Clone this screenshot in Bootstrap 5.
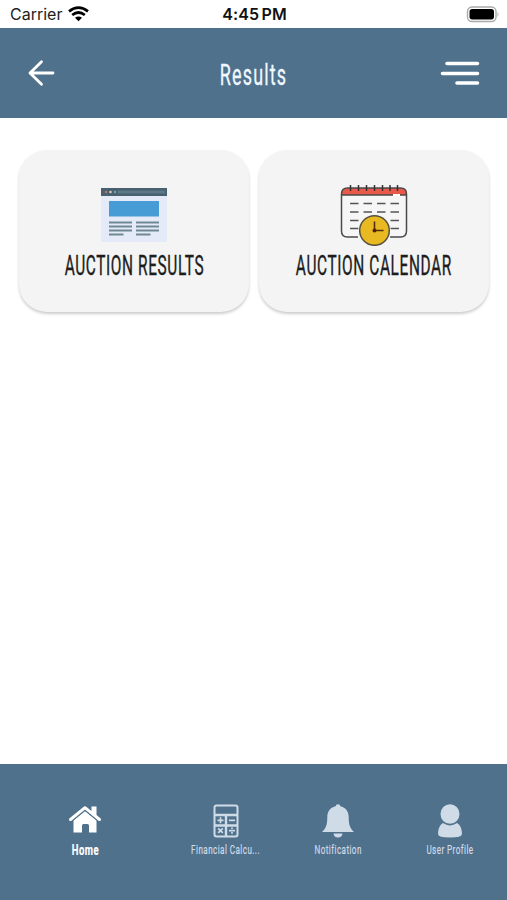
<!DOCTYPE html>
<html lang="en">
<head>
<meta charset="utf-8">
<meta name="viewport" content="width=device-width, initial-scale=1">
<title>Results</title>
<link href="https://cdn.jsdelivr.net/npm/bootstrap@5.3.0/dist/css/bootstrap.min.css" rel="stylesheet">
<style>
body{font-family:Roboto,"Liberation Sans",sans-serif;height:900px;overflow:hidden;background:#fff}
svg{display:block}
.status{height:28px;font-family:Inter,"Liberation Sans",sans-serif;font-size:16px;line-height:28px;color:#222}
.status>*{flex:1}
.carrier{padding-left:10px;gap:6px}
.clock{font-weight:600;color:#111;font-size:16px;letter-spacing:.15px;word-spacing:-2px}
.bar{height:90px;background:#50718c;color:#fff;padding:0 27px}
.narrow{display:inline-block;white-space:nowrap;transform-origin:center}
.title{font-size:29px;line-height:36px;letter-spacing:1.9px;transform:scaleX(.62);color:#f0f8ff;padding-top:3px;-webkit-text-stroke:.3px #f0f8ff}
.tiles{padding:32px 18px 0 19px;gap:10px}
.tile{flex:1 1 0;width:0;height:162px;border:0;border-radius:28px;background:#f4f4f4;box-shadow:0 2px 3px rgba(0,0,0,.2);padding-top:34px}
.tile-label{font-size:27px;line-height:32px;letter-spacing:1.1px;color:#1d1d1d;-webkit-text-stroke:.4px #1d1d1d;transform:scaleX(.57)}
.art{height:66px}
.tabs{height:136px;background:#50718c;padding:38px 0 0 29px}
.tab{width:112px;color:#cfdce8}
.tab-first{margin-right:29px}
.tab-icon{height:38px}
.tab-label{font-size:13px;line-height:18px;letter-spacing:.72px;-webkit-text-stroke:.2px currentColor;margin-top:1px;transform:scaleX(.62)}
.home-label{font-size:15.5px;font-weight:700;letter-spacing:.8px;color:#fff;transform:scaleX(.61)}
</style>
<script src="https://cdn.jsdelivr.net/npm/bootstrap@5.3.0/dist/js/bootstrap.bundle.min.js"></script>
</head>
<body class="d-flex flex-column">
<div class="status d-flex align-items-center">
  <div class="carrier d-flex align-items-center"><span>Carrier</span>
    <svg width="21" height="16" viewBox="0 0 21 16" fill="none" stroke="#000" stroke-width="2.7"><path d="M1 5.4Q10.500-2 20 5.400M4.200 9Q10.500 4 16.800 9"/><path d="M7 11.800Q10.500 9.200 14 11.800L10.500 15.300Z" fill="#000" stroke="none"/></svg>
  </div>
  <div class="clock text-center">4:45 PM</div>
  <div class="d-flex justify-content-end pe-2">
    <svg width="33" height="17" viewBox="0 0 33 17"><rect x="1.500" y="1" width="28.500" height="14.500" rx="4.500" fill="#fff" stroke="#aaa" stroke-width="1.400"/><rect x="3.500" y="3" width="24.500" height="10.500" rx="2.700"/><path d="M31.500 6v5q2-2.500 0-5" fill="#aaa"/></svg>
  </div>
</div>
<header class="bar d-flex align-items-center justify-content-between">
  <svg width="40" height="28" viewBox="0 0 40 28" fill="none" stroke="#fff" stroke-width="2.800" stroke-linecap="round" stroke-linejoin="round"><path d="M26 14H3M14.500 2.800L3 14L14.500 25.200"/></svg>
  <span class="narrow title">Results</span>
  <svg width="40" height="28" viewBox="0 0 40 28" stroke="#fff" stroke-width="3.600" stroke-linecap="round"><path d="M7 4.500H37.500M2.500 14.500H37.500M17 24H37.500"/></svg>
</header>
<main class="tiles d-flex flex-grow-1 align-items-start">
  <div class="tile card align-items-center">
    <div class="art">
      <svg width="68" height="60" viewBox="0 0 68 60"><path fill="#e4eaf7" d="M1 4h66v54H1z"/><path fill="#48606f" d="M1 4h66v8H1z"/><path fill="#5c7889" d="M18 6.500h47v3H18z"/><circle cx="6" cy="8" r="1.200" fill="#d16b67"/><circle cx="10.500" cy="8" r="1.200" fill="#d5d5c9"/><circle cx="15" cy="8" r="1.200" fill="#6fa5a8"/><path fill="#479cd6" d="M9 17h50v15.500H9z"/><path stroke="#708795" stroke-width="2" d="M9 38.500h23M9 42.500h23M9 46.500h23M9 50.500h14.500M36 38.500h23M36 42.500h23M36 46.500h23M36 50.500h14.500"/></svg>
    </div>
    <span class="narrow tile-label">AUCTION RESULTS</span>
  </div>
  <div class="tile card align-items-center">
    <div class="art">
      <svg width="68" height="62" viewBox="0 0 68 62" fill="none"><rect x="1.500" y="4" width="65" height="49" rx="6" fill="#f6f6f6"/><path d="M1.500 11V10Q1.500 4 7.500 4H60.500Q66.500 4 66.500 10V11Z" fill="#e9594a"/><path d="M53 11h7" stroke="#fff" stroke-width="2"/><path d="M18 53H7.500Q1.500 53 1.500 47V10Q1.500 4 7.500 4H60.500Q66.500 4 66.500 10V47Q66.500 53 60.500 53H50M1.500 11H53M60 11H66" stroke="#4a4a4a" stroke-width="1.500"/><path d="M10.500 1v6M18.500 1v6M26.500 1v6M34.500 1v6M42.500 1v6M50 1v6M57.500 1v6" stroke="#333" stroke-width="1.500"/><path d="M10 19.500h8.500M23.500 19.500H32M37 19.500h8.500M50.500 19.500H59M10 28h8.500M23.500 28H32M37 28h8.500M50.500 28H59M10 36.500h8.500M50.500 36.500H59M10 44.500h8.500M50.500 44.500H59" stroke="#555" stroke-width="1.700"/><circle cx="34.500" cy="46.500" r="16" fill="#f4f4f4"/><circle cx="34.500" cy="46.500" r="14.800" fill="#e8b921" stroke="#56513f" stroke-width="1.500"/><path d="M34.500 37.500v9h9" stroke="#52310b" stroke-width="1.600"/><circle cx="34.500" cy="46.500" r="2" fill="#52230b"/></svg>
    </div>
    <span class="narrow tile-label">AUCTION CALENDAR</span>
  </div>
</main>
<nav class="tabs d-flex">
  <div class="tab tab-first d-flex flex-column align-items-center">
    <div class="tab-icon"><svg width="34" height="36" viewBox="0 0 34 36" fill="#fff"><path d="M17 9L28.500 18.500V30.500H21V23.500Q21 22 19.500 22H15.500Q14 22 14 23.500V30.500H5.500V18.500Z"/><path d="M2.500 17.500L17 5.700L31.500 17.500" fill="none" stroke="#50718c" stroke-width="5"/><path d="M23.500 4.500h5v10l-5-4z"/><path d="M2.500 17.500L17 5.700L31.500 17.500" fill="none" stroke="#fff" stroke-width="3" stroke-linecap="round" stroke-linejoin="round"/></svg></div>
    <span class="narrow tab-label home-label">Home</span>
  </div>
  <div class="tab d-flex flex-column align-items-center">
    <div class="tab-icon"><svg width="26" height="36" viewBox="0 0 26 36" fill="none" stroke="#cfdce8" stroke-width="2"><rect x="1.500" y="3.500" width="23" height="31" rx="2"/><path d="M1 13h24M13 13v21M1 23.500h24" stroke-width="2.400"/><path d="M4.500 18.300h6M7.500 15.300v6M16 18.300h6M5.200 26.300l4.600 4.600M9.800 26.300l-4.600 4.600M16 28.600h6" stroke-width="1.700"/><path d="M19 25.500v1.600M19 30.100v1.600" stroke-width="1.700"/></svg></div>
    <span class="narrow tab-label">Financial Calcu...</span>
  </div>
  <div class="tab d-flex flex-column align-items-center">
    <div class="tab-icon"><svg width="34" height="36" viewBox="0 0 34 36" fill="#cfdce8"><circle cx="17" cy="4.500" r="2.300"/><path d="M17 4C10 4 6.300 9 6.300 15C6.300 24 4.500 26.500 1 30H33C29.500 26.500 27.700 24 27.700 15C27.700 9 24 4 17 4ZM12.500 31.500h9Q21 35.500 17 35.500T12.500 31.500Z"/></svg></div>
    <span class="narrow tab-label">Notification</span>
  </div>
  <div class="tab d-flex flex-column align-items-center">
    <div class="tab-icon"><svg width="26" height="36" viewBox="0 0 26 36" fill="#cfdce8"><ellipse cx="13" cy="12" rx="9.500" ry="9.800"/><path d="M6 21Q13 25.800 20 21Q25 24 25 32Q25 35.500 13 35.500T1 32Q1 24 6 21Z"/></svg></div>
    <span class="narrow tab-label">User Profile</span>
  </div>
</nav>
</body>
</html>
